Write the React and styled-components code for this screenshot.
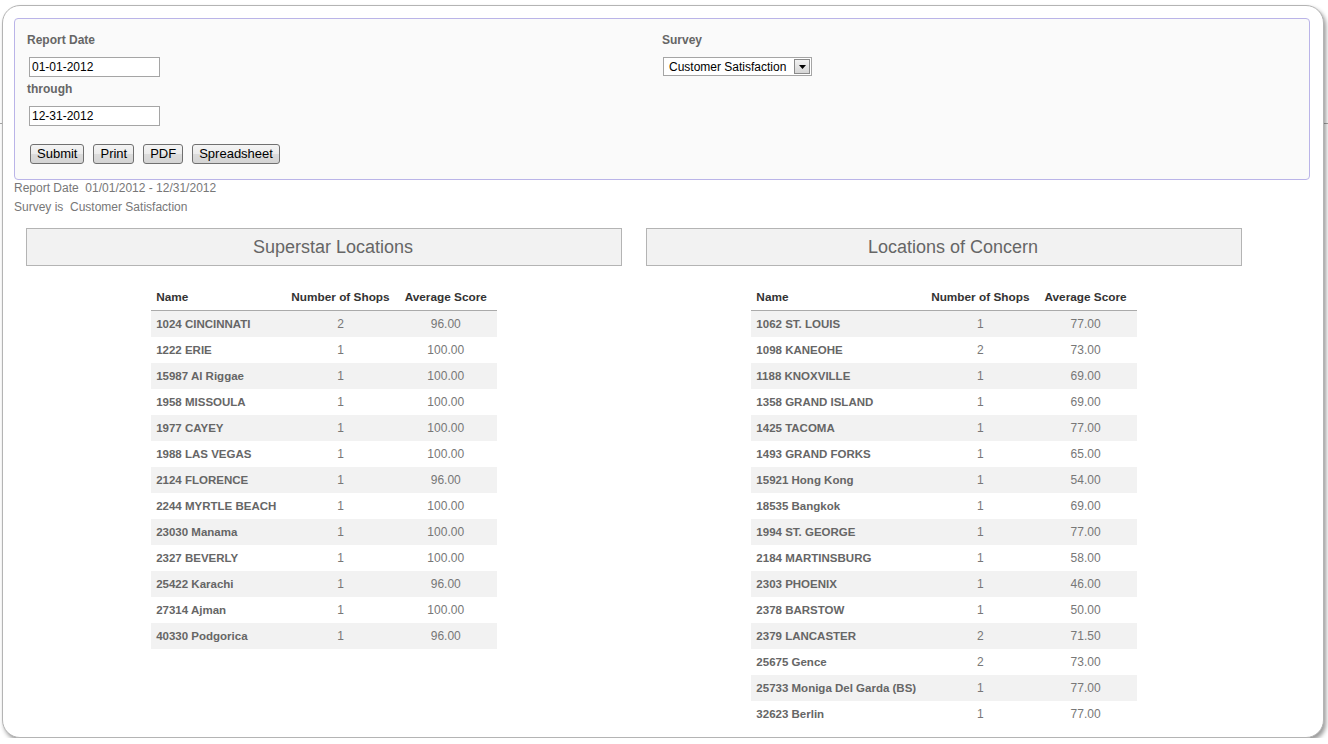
import React from "react";
import styled, { createGlobalStyle } from "styled-components";

const GlobalStyle = createGlobalStyle`
  html, body {
    margin: 0;
    padding: 0;
  }
  body {
    font-family: "Liberation Sans", Arial, sans-serif;
    background: linear-gradient(
      to bottom,
      #fff 0,
      #fff 123px,
      #a8a8a8 123px,
      #a8a8a8 124px,
      #fff 124px
    );
    overflow: hidden;
  }
`;

const superstars = [
  ["1024 CINCINNATI", 2, "96.00"],
  ["1222 ERIE", 1, "100.00"],
  ["15987 Al Riggae", 1, "100.00"],
  ["1958 MISSOULA", 1, "100.00"],
  ["1977 CAYEY", 1, "100.00"],
  ["1988 LAS VEGAS", 1, "100.00"],
  ["2124 FLORENCE", 1, "96.00"],
  ["2244 MYRTLE BEACH", 1, "100.00"],
  ["23030 Manama", 1, "100.00"],
  ["2327 BEVERLY", 1, "100.00"],
  ["25422 Karachi", 1, "96.00"],
  ["27314 Ajman", 1, "100.00"],
  ["40330 Podgorica", 1, "96.00"],
];

const concerns = [
  ["1062 ST. LOUIS", 1, "77.00"],
  ["1098 KANEOHE", 2, "73.00"],
  ["1188 KNOXVILLE", 1, "69.00"],
  ["1358 GRAND ISLAND", 1, "69.00"],
  ["1425 TACOMA", 1, "77.00"],
  ["1493 GRAND FORKS", 1, "65.00"],
  ["15921 Hong Kong", 1, "54.00"],
  ["18535 Bangkok", 1, "69.00"],
  ["1994 ST. GEORGE", 1, "77.00"],
  ["2184 MARTINSBURG", 1, "58.00"],
  ["2303 PHOENIX", 1, "46.00"],
  ["2378 BARSTOW", 1, "50.00"],
  ["2379 LANCASTER", 2, "71.50"],
  ["25675 Gence", 2, "73.00"],
  ["25733 Moniga Del Garda (BS)", 1, "77.00"],
  ["32623 Berlin", 1, "77.00"],
];

function ScoreTable({ rows }) {
  return (
    <Table>
      <thead>
        <tr>
          <Th>Name</Th>
          <Th center>Number of Shops</Th>
          <Th center>Average Score</Th>
        </tr>
      </thead>
      <tbody>
        {rows.map(([name, shops, score]) => (
          <tr key={name}>
            <NameCell>{name}</NameCell>
            <NumCell>{shops}</NumCell>
            <NumCell>{score}</NumCell>
          </tr>
        ))}
      </tbody>
    </Table>
  );
}

export default function App() {
  return (
    <>
      <GlobalStyle />
      <Card>
        <FilterPanel>
          <Field>
            <Label>Report Date</Label>
            <TextInput defaultValue="01-01-2012" />
            <Label top={5}>through</Label>
            <TextInput defaultValue="12-31-2012" />
            <ButtonRow>
              <Button>Submit</Button>
              <Button>Print</Button>
              <Button>PDF</Button>
              <Button>Spreadsheet</Button>
            </ButtonRow>
          </Field>
          <Field>
            <Label>Survey</Label>
            <SelectBox>
              <SelectText>Customer Satisfaction</SelectText>
              <SelectArrow>
                <svg width="7" height="4" viewBox="0 0 7 4">
                  <path d="M0 0h7L3.5 4z" fill="#000" />
                </svg>
              </SelectArrow>
            </SelectBox>
          </Field>
        </FilterPanel>

        <Summary>
          <div>Report Date&nbsp; 01/01/2012 - 12/31/2012</div>
          <div>Survey is&nbsp; Customer Satisfaction</div>
        </Summary>

        <Columns>
          <Column>
            <SectionTitle>Superstar Locations</SectionTitle>
            <ScoreTable rows={superstars} />
          </Column>
          <Column>
            <SectionTitle>Locations of Concern</SectionTitle>
            <ScoreTable rows={concerns} />
          </Column>
        </Columns>
      </Card>
    </>
  );
}

const Card = styled.div`
  margin: 5px 4px 0 2px;
  height: 733px;
  box-sizing: border-box;
  padding: 12px 13px 0 11px;
  background: #fff;
  border: 1px solid #b4b4b4;
  border-radius: 18px;
  box-shadow: 2px 3px 4px rgba(0, 0, 0, 0.4);
  overflow: hidden;
`;

const FilterPanel = styled.div`
  display: grid;
  grid-template-columns: 1fr 1fr;
  padding: 14px 12px 15px;
  background: #fafafa;
  border: 1px solid #bab4e8;
  border-radius: 4px;
`;

const Field = styled.div`
  display: flex;
  flex-direction: column;
  align-items: flex-start;
`;

const Label = styled.div`
  margin-top: ${(p) => p.top || 0}px;
  margin-bottom: 10px;
  font-size: 12px;
  line-height: 14px;
  font-weight: bold;
  color: #666;
`;

const TextInput = styled.input`
  box-sizing: border-box;
  width: 131px;
  height: 20px;
  margin: 0 0 0 2px;
  padding: 0 2px;
  border: 1px solid #a5a5a5;
  background: #fff;
  font-family: "Liberation Sans", Arial, sans-serif;
  font-size: 12px;
  color: #000;
  outline: none;
`;

const ButtonRow = styled.div`
  display: flex;
  gap: 9px;
  margin: 18px 0 0 3px;
`;

const Button = styled.button`
  box-sizing: border-box;
  height: 20px;
  padding: 0 6px;
  border: 1px solid #707070;
  border-radius: 3px;
  background: linear-gradient(to bottom, #f4f4f4 0%, #ebebeb 50%, #dcdcdc 51%, #d4d4d4 100%);
  font-family: "Liberation Sans", Arial, sans-serif;
  font-size: 13px;
  line-height: 18px;
  color: #000;
`;

const SelectBox = styled.div`
  box-sizing: border-box;
  display: flex;
  align-items: center;
  width: 149px;
  height: 19px;
  margin-left: 1px;
  border: 1px solid #a5a5a5;
  background: #fff;
`;

const SelectText = styled.span`
  flex: 1;
  padding-left: 5px;
  font-size: 12px;
  color: #000;
  white-space: nowrap;
  overflow: hidden;
`;

const SelectArrow = styled.span`
  box-sizing: border-box;
  display: flex;
  align-items: center;
  justify-content: center;
  width: 16px;
  height: 15px;
  margin-right: 1px;
  border: 1px solid #8a8a8a;
  background: linear-gradient(to bottom, #f2f2f2, #d6d6d6);
`;

const Summary = styled.div`
  margin-top: -1px;
  font-size: 12px;
  line-height: 19px;
  color: #777;
`;

const Columns = styled.div`
  display: grid;
  grid-template-columns: 620px 620px;
  margin-top: 11px;
`;

const Column = styled.div`
  display: flex;
  flex-direction: column;
`;

const SectionTitle = styled.div`
  box-sizing: border-box;
  display: flex;
  align-items: center;
  justify-content: center;
  height: 38px;
  margin: 0 12px;
  padding-left: 18px;
  border: 1px solid #b4b4b4;
  background: #f2f2f2;
  font-size: 18px;
  color: #666;
`;

const Table = styled.table`
  margin: 18px auto 0;
  border-collapse: collapse;
  font-size: 12px;

  tbody tr:nth-child(odd) {
    background: #f2f2f2;
  }
`;

const Th = styled.th`
  height: 26px;
  padding: 0 10px 0 5px;
  text-align: ${(p) => (p.center ? "center" : "left")};
  font-size: 11.8px;
  font-weight: bold;
  color: #333;
  white-space: nowrap;
  border-bottom: 1px solid #aaa;
`;

const NameCell = styled.td`
  height: 26px;
  padding: 0 10px 0 5px;
  font-size: 11.5px;
  font-weight: bold;
  color: #666;
  white-space: nowrap;
`;

const NumCell = styled.td`
  height: 26px;
  padding: 0 10px 0 5px;
  text-align: center;
  color: #777;
  white-space: nowrap;
`;
